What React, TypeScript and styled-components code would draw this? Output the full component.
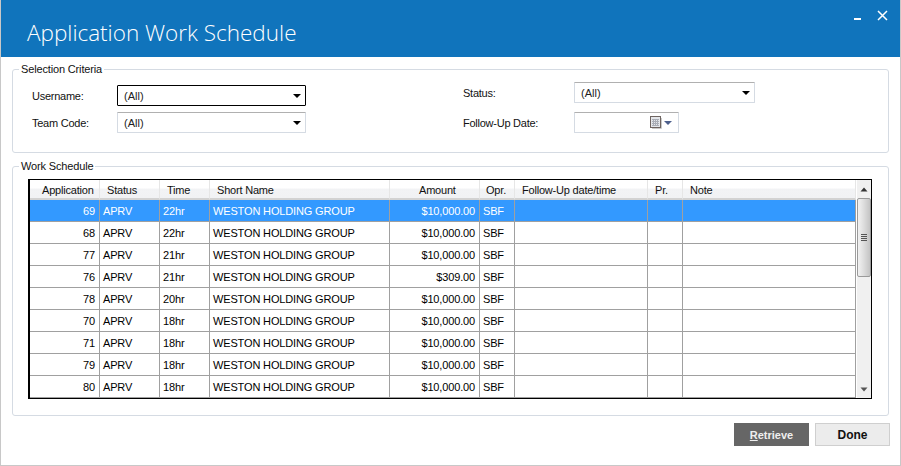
import React from "react";
import styled, { createGlobalStyle } from "styled-components";

const GlobalStyle = createGlobalStyle`
  html, body { margin: 0; padding: 0; background: #fff; }
  body { font-family: "Liberation Sans", Arial, sans-serif; font-size: 11px; color: #000; }
`;

const Win = styled.div`
  width: 901px;
  height: 466px;
  box-sizing: border-box;
  border: 1px solid #c8c8c8;
  border-top: 0;
  display: flex;
  flex-direction: column;
  overflow: hidden;
`;

const Header = styled.header`
  height: 57px;
  margin: 0 -1px;
  background: #1074bc;
  color: #fff;
  display: flex;
  justify-content: space-between;
  flex: none;
`;

const Title = styled.h1`
  margin: 19px 0 0 27px;
  font-family: "Open Sans", sans-serif;
  font-weight: 300;
  font-size: 22.5px;
  line-height: 28px;
`;

const WinButtons = styled.div`
  display: flex;
  gap: 15px;
  margin: 9px 13px 0 0;
  height: 14px;
`;

const Body = styled.div`
  flex: 1;
  padding: 5px 11px 0;
  display: flex;
  flex-direction: column;
`;

const Group = styled.fieldset<{ $h: number; $mt?: number }>`
  margin: ${(p) => p.$mt ?? 0}px 0 0;
  padding: 0;
  height: ${(p) => p.$h}px;
  box-sizing: border-box;
  border: 1px solid #d5dbe3;
  border-radius: 3px;
  flex: none;
  min-width: 0;

  legend {
    margin-left: 6px;
    padding: 0 2px;
    font-size: 11px;
    line-height: 14px;
    letter-spacing: -0.15px;
    color: #111;
  }
`;

const Criteria = styled.div`
  display: flex;
  padding-left: 19px;
`;

const FormCol = styled.div<{ $w: number; $top: number; $gap: number }>`
  width: ${(p) => p.$w}px;
  padding-top: ${(p) => p.$top}px;
  display: flex;
  flex-direction: column;
  gap: ${(p) => p.$gap}px;
`;

const FormRow = styled.div`
  display: flex;
  align-items: center;
`;

const Label = styled.label<{ $w: number }>`
  width: ${(p) => p.$w}px;
  flex: none;
  color: #111;
  letter-spacing: -0.25px;
`;

const Select = styled.div<{ $w: number; $focus?: boolean }>`
  width: ${(p) => p.$w}px;
  height: 21px;
  box-sizing: border-box;
  border: 1px solid ${(p) => (p.$focus ? "#000" : "#d5dbe3")};
  border-top-color: ${(p) => (p.$focus ? "#000" : "#b0b0b0")};
  border-radius: 1px;
  display: flex;
  align-items: center;
  justify-content: space-between;
  padding: 0 4px 0 6px;
  color: #222;
`;

const Caret = styled.span`
  width: 0;
  height: 0;
  border-left: 4px solid transparent;
  border-right: 4px solid transparent;
  border-top: 4px solid #000;
`;

const DateCaret = styled(Caret)`
  border-top-color: #4c5f8c;
  margin: 0 2px 0 2px;
`;

const DateIcons = styled.span`
  display: flex;
  align-items: center;
  margin-left: auto;
`;

const TableBox = styled.div`
  margin: 6px 16px 0 15px;
  height: 220px;
  box-sizing: border-box;
  border: 1px solid #000;
  border-left-width: 2px;
  display: flex;
  background: #fff;
`;

const TableScroll = styled.div`
  width: 827px;
  flex: none;
  overflow: hidden;
`;

const Grid = styled.table`
  border-collapse: separate;
  border-spacing: 0;
  table-layout: fixed;
  width: 826px;
`;

const Th = styled.th<{ $pad: number }>`
  height: 20px;
  box-sizing: border-box;
  padding: 2px 0 0 ${(p) => p.$pad}px;
  font-weight: 400;
  font-size: 11px;
  letter-spacing: -0.2px;
  color: #111;
  background: linear-gradient(#fff 0%, #fff 45%, #f2f3f5 50%, #f1f2f4 100%);
  border-right: 1px solid #e6e6e6;
  border-bottom: 2px solid #d2d2d2;
  text-align: left;
`;

const Row = styled.tr<{ $sel?: boolean }>`
  background: ${(p) => (p.$sel ? "#3399ff" : "#fff")};
  color: ${(p) => (p.$sel ? "#fff" : "#000")};
`;

const Td = styled.td<{ $right?: boolean }>`
  height: 22px;
  box-sizing: border-box;
  padding: 0 4px 0 3px;
  border-right: 1px solid #a0a0a0;
  border-bottom: 1px solid #a0a0a0;
  text-align: ${(p) => (p.$right ? "right" : "left")};
  letter-spacing: -0.15px;
  white-space: nowrap;
  overflow: hidden;
`;

const Scrollbar = styled.div`
  flex: 1;
  background: #f0f0f0;
  display: flex;
  flex-direction: column;
  align-items: center;
`;

const ScrollBtn = styled.div`
  height: 18px;
  flex: none;
  width: 100%;
  display: flex;
  align-items: center;
  justify-content: center;
`;

const ScrollThumb = styled.div`
  width: 14px;
  height: 79px;
  box-sizing: border-box;
  border: 1px solid #9a9a9a;
  border-radius: 2px;
  background: linear-gradient(90deg, #f2f2f2, #dcdcdc 50%, #c4c4c4);
  display: flex;
  flex-direction: column;
  align-items: center;
  justify-content: center;
  gap: 1px;
  flex: none;

  i {
    display: block;
    width: 6px;
    height: 1px;
    background: #555;
  }
`;

const ScrollTrack = styled.div`
  flex: 1;
`;

const Footer = styled.div`
  display: flex;
  justify-content: flex-end;
  gap: 6px;
  margin: 7px -1px 0 0;
`;

const Btn = styled.button<{ $primary?: boolean }>`
  width: 75px;
  height: 23px;
  box-sizing: border-box;
  padding: 0;
  font-family: inherit;
  font-size: ${(p) => (p.$primary ? 11 : 12)}px;
  font-weight: 700;
  border: 1px solid ${(p) => (p.$primary ? "#666" : "#cfcfcf")};
  background: ${(p) => (p.$primary ? "#666" : "#ececec")};
  color: ${(p) => (p.$primary ? "#eee" : "#111")};

  u { text-underline-offset: 1px; }
`;

const columns = [
  { t: "Application", w: 70, pad: 12 },
  { t: "Status", w: 60, pad: 7 },
  { t: "Time", w: 50, pad: 7 },
  { t: "Short Name", w: 180, pad: 7 },
  { t: "Amount", w: 90, pad: 29 },
  { t: "Opr.", w: 35, pad: 6 },
  { t: "Follow-Up date/time", w: 133, pad: 7 },
  { t: "Pr.", w: 35, pad: 7 },
  { t: "Note", w: 173, pad: 7 },
];

const rows = [
  [69, "22hr", "$10,000.00"],
  [68, "22hr", "$10,000.00"],
  [77, "21hr", "$10,000.00"],
  [76, "21hr", "$309.00"],
  [78, "20hr", "$10,000.00"],
  [70, "18hr", "$10,000.00"],
  [71, "18hr", "$10,000.00"],
  [79, "18hr", "$10,000.00"],
  [80, "18hr", "$10,000.00"],
];

function CalendarIcon() {
  return (
    <svg width="12" height="13" viewBox="0 0 12 13">
      <rect x="0.5" y="0.5" width="10" height="11" fill="#e4e6ea" stroke="#6e6460" />
      <path d="M2 3.5h7M2 5.5h7M2 7.5h7M2 9.5h7M3.5 3v7M5.5 3v7M7.5 3v7" stroke="#a9adb6" strokeWidth="1" />
      <path d="M11.5 2v10.5H2" fill="none" stroke="#c9c9c9" />
    </svg>
  );
}

export default function App() {
  return (
    <Win>
      <GlobalStyle />
      <Header>
        <Title>Application Work Schedule</Title>
        <WinButtons>
          <svg width="9" height="14" viewBox="0 0 9 14">
            <rect x="1" y="9" width="7" height="2" fill="#fff" />
          </svg>
          <svg width="11" height="14" viewBox="0 0 11 14">
            <path d="M1 2l9 9M10 2l-9 9" stroke="#fff" strokeWidth="1.5" fill="none" />
          </svg>
        </WinButtons>
      </Header>
      <Body>
        <Group $h={91}>
          <legend>Selection Criteria</legend>
          <Criteria>
            <FormCol $w={431} $top={9} $gap={6}>
              <FormRow>
                <Label $w={85}>Username:</Label>
                <Select $w={189} $focus>
                  (All)
                  <Caret />
                </Select>
              </FormRow>
              <FormRow>
                <Label $w={85}>Team Code:</Label>
                <Select $w={189}>
                  (All)
                  <Caret />
                </Select>
              </FormRow>
            </FormCol>
            <FormCol $w={300} $top={6} $gap={9}>
              <FormRow>
                <Label $w={111}>Status:</Label>
                <Select $w={181}>
                  (All)
                  <Caret />
                </Select>
              </FormRow>
              <FormRow>
                <Label $w={111}>Follow-Up Date:</Label>
                <Select $w={105}>
                  <DateIcons>
                    <CalendarIcon />
                    <DateCaret />
                  </DateIcons>
                </Select>
              </FormRow>
            </FormCol>
          </Criteria>
        </Group>
        <Group $h={257} $mt={6}>
          <legend>Work Schedule</legend>
          <TableBox>
            <TableScroll>
              <Grid>
                <colgroup>
                  {columns.map((c) => (
                    <col key={c.t} width={c.w} />
                  ))}
                </colgroup>
                <thead>
                  <tr>
                    {columns.map((c) => (
                      <Th key={c.t} $pad={c.pad}>
                        {c.t}
                      </Th>
                    ))}
                  </tr>
                </thead>
                <tbody>
                  {rows.map((r, i) => (
                    <Row key={r[0]} $sel={i === 0}>
                      <Td $right>{r[0]}</Td>
                      <Td>APRV</Td>
                      <Td>{r[1]}</Td>
                      <Td>WESTON HOLDING GROUP</Td>
                      <Td $right>{r[2]}</Td>
                      <Td>SBF</Td>
                      <Td />
                      <Td />
                      <Td />
                    </Row>
                  ))}
                </tbody>
              </Grid>
            </TableScroll>
            <Scrollbar>
              <ScrollBtn>
                <svg width="8" height="5" viewBox="0 0 8 5">
                  <path d="M4 0.5L7.5 4.5H0.5Z" fill="#333" />
                </svg>
              </ScrollBtn>
              <ScrollThumb>
                <i />
                <i />
                <i />
                <i />
              </ScrollThumb>
              <ScrollTrack />
              <ScrollBtn>
                <svg width="8" height="5" viewBox="0 0 8 5">
                  <path d="M4 4.5L7.5 0.5H0.5Z" fill="#555" />
                </svg>
              </ScrollBtn>
            </Scrollbar>
          </TableBox>
        </Group>
        <Footer>
          <Btn $primary>
            <u>R</u>etrieve
          </Btn>
          <Btn>Done</Btn>
        </Footer>
      </Body>
    </Win>
  );
}
